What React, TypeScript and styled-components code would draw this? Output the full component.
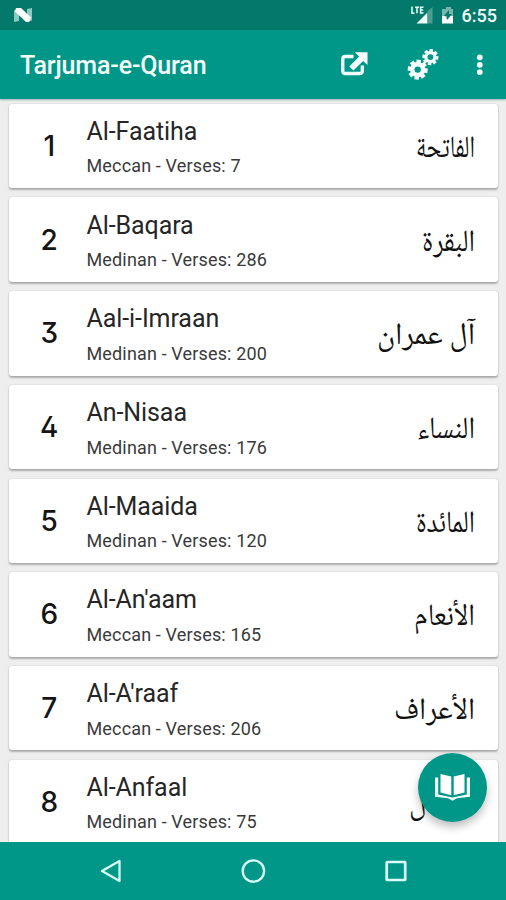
import React from 'react';
import styled, { createGlobalStyle } from 'styled-components';

const Global = createGlobalStyle`
  * { box-sizing: border-box; }
  body { margin: 0; background: #eeeeee; font-family: Roboto, "Liberation Sans", sans-serif; }
`;

const Screen = styled.div`
  position: relative;
  width: 506px;
  height: 900px;
  display: flex;
  flex-direction: column;
  overflow: hidden;
  background: #eeeeee;
`;

const StatusBar = styled.header`
  flex: 0 0 30px;
  display: flex;
  align-items: center;
  justify-content: space-between;
  padding: 0 9px 0 13px;
  background: #03796b;
`;

const StatusItems = styled.div`
  display: flex;
  align-items: center;
`;

const Clock = styled.span`
  margin-left: 8px;
  padding-top: 2px;
  font-size: 18px;
  line-height: 20px;
  font-weight: 500;
  color: #f2fffb;
`;

const AppBar = styled.div`
  flex: 0 0 68.5px;
  display: flex;
  align-items: center;
  padding: 4px 19px 0 20px;
  background: #009688;
  box-shadow: 0 1px 2px rgba(0, 70, 60, 0.35);
  z-index: 1;
`;

const Title = styled.h1`
  flex: 1;
  margin: 0;
  font-size: 25px;
  line-height: 30px;
  letter-spacing: -0.15px;
  font-weight: 500;
  color: #f4fffc;
`;

const Actions = styled.div`
  display: flex;
  align-items: center;
  svg { display: block; }
`;

const List = styled.main`
  flex: 1;
  min-height: 0;
  overflow: hidden;
  display: flex;
  flex-direction: column;
  gap: 9.3px;
  padding: 5.3px 8px 0 9px;
`;

const Card = styled.article`
  flex: 0 0 84.4px;
  display: flex;
  align-items: center;
  background: #ffffff;
  border-radius: 3px;
  padding-right: 23px;
  box-shadow: 0 1.5px 2px rgba(0, 0, 0, 0.27), 0 0 1.5px rgba(0, 0, 0, 0.14);
`;

const Index = styled.div`
  width: 77.5px;
  padding: 0 0 0 3px;
  text-align: center;
  font-family: Inter, sans-serif;
  font-feature-settings: "cv02", "cv09";
  font-size: 28px;
  font-weight: 500;
  color: #151515;
`;

const Info = styled.div`
  flex: 1;
  padding-top: 2.4px;
`;

const Name = styled.div`
  font-size: 25px;
  line-height: 32px;
  letter-spacing: -0.08px;
  color: #262626;
`;

const Detail = styled.div`
  margin-top: 6.5px;
  font-size: 18px;
  line-height: 24px;
  letter-spacing: 0.15px;
  color: #3a3a3a;
`;

const Arabic = styled.svg`
  display: block;
  width: 110px;
  height: 56px;
  overflow: visible;
  text {
    font-family: "Noto Naskh Arabic", Amiri, "DejaVu Sans", serif;
    font-size: 31px;
    fill: #111111;
  }
`;

const NavBar = styled.nav`
  flex: 0 0 58.5px;
  display: flex;
  justify-content: center;
  align-items: center;
  gap: 118px;
  background: #009688;
  svg { display: block; }
`;

const Fab = styled.button`
  position: absolute;
  right: 19px;
  bottom: 78px;
  width: 69px;
  height: 69px;
  padding: 0;
  border: 0;
  border-radius: 50%;
  display: grid;
  place-items: center;
  background: #009688;
  box-shadow: 0 5px 8px rgba(0, 0, 0, 0.25);
`;

type Surah = { name: string; place: string; verses: number; arabic: string; width: number };

const surahs: Surah[] = [
  { name: 'Al-Faatiha', place: 'Meccan', verses: 7, arabic: 'الفاتحة', width: 59 },
  { name: 'Al-Baqara', place: 'Medinan', verses: 286, arabic: 'البقرة', width: 53 },
  { name: 'Aal-i-Imraan', place: 'Medinan', verses: 200, arabic: 'آل عمران', width: 98 },
  { name: 'An-Nisaa', place: 'Medinan', verses: 176, arabic: 'النساء', width: 58 },
  { name: 'Al-Maaida', place: 'Medinan', verses: 120, arabic: 'المائدة', width: 59 },
  { name: "Al-An'aam", place: 'Meccan', verses: 165, arabic: 'الأنعام', width: 61 },
  { name: "Al-A'raaf", place: 'Meccan', verses: 206, arabic: 'الأعراف', width: 81 },
  { name: 'Al-Anfaal', place: 'Medinan', verses: 75, arabic: 'الأنفال', width: 66 },
];

function gear(cx: number, cy: number, outer: number, inner: number, hole: number) {
  const points: string[] = [];
  for (let i = 0; i < 8; i++) {
    const a = (i * Math.PI) / 4 + 0.12;
    [[-0.3, inner], [-0.22, outer], [0.22, outer], [0.3, inner]].forEach(([d, r]) => {
      points.push(`${(cx + Math.cos(a + d) * r).toFixed(2)} ${(cy + Math.sin(a + d) * r).toFixed(2)}`);
    });
  }
  return `M${points.join('L')}ZM${cx - hole} ${cy}a${hole} ${hole} 0 1 0 ${hole * 2} 0a${hole} ${hole} 0 1 0 ${-hole * 2} 0Z`;
}

export default function App() {
  return (
    <>
      <Global />
      <Screen>
        <StatusBar>
          <svg width="20" height="16" viewBox="0 0 20 16">
            <path d="M1 3.5 6 1v13l-5 1ZM14 2l5-1v12.5L14 15Z" fill="#8bcac0" />
            <path d="M3 1h5l10 9.5-2 4.5h-3L2 4.5Z" fill="#fff" />
          </svg>
          <StatusItems>
            <svg width="46" height="22" viewBox="0 0 46 22">
              <path d="M19.5 8.5v11H8.5Z" fill="#f4fffc" />
              <path d="M19.5 7 24.5 3v16.5h-5Z" fill="#4b9d92" />
              <path d="M4 2.5v6.7h2.5M7 3.2h4M9 3v6.2M15.5 3.2H12.6v5.9h2.9M12.6 6.1h2.6" fill="none" stroke="#e9fffb" strokeWidth="1.5" />
              <path d="M36 5h2V3h5v2h2v9H34V5Z" fill="#76b6ad" />
              <path d="M34 12h3l2 3 3-3h3v7.5H34Z" fill="#fff" />
              <path d="m41 6-5 6h3v4l5-6h-3Z" fill="#087669" />
            </svg>
            <Clock>6:55</Clock>
          </StatusItems>
        </StatusBar>
        <AppBar>
          <Title>Tarjuma-e-Quran</Title>
          <Actions>
            <svg width="148" height="36" viewBox="0 0 148 36">
              <path d="M14.5 8.5H6.3q-2.5 0-2.5 2.5v12q0 2.5 2.5 2.5h14.5q2.5 0 2.5-2.5v-5.5" fill="none" stroke="#f4fffc" strokeWidth="3.3" />
              <path d="M16 4.2H28.5v12.8l-4.4-4.1-9.7 9.7-4.1-4.1 9.7-9.7Z" fill="#f4fffc" />
              <path fillRule="evenodd" fill="#f4fffc" d={gear(78.7, 21.6, 10.2, 7.6, 3.2)} />
              <path fillRule="evenodd" fill="#f4fffc" d={gear(91.4, 9.1, 8.2, 6, 2.9)} />
              <circle cx="140.8" cy="9.3" r="2.9" fill="#f4fffc" />
              <circle cx="140.8" cy="16.8" r="2.9" fill="#f4fffc" />
              <circle cx="140.8" cy="24.1" r="2.9" fill="#f4fffc" />
            </svg>
          </Actions>
        </AppBar>
        <List>
          {surahs.map((s, i) => (
            <Card key={s.name}>
              <Index>{i + 1}</Index>
              <Info>
                <Name>{s.name}</Name>
                <Detail>{s.place} - Verses: {s.verses}</Detail>
              </Info>
              <Arabic viewBox="0 0 110 56">
                <text x="110" y="39" direction="rtl" textLength={s.width} lengthAdjust="spacingAndGlyphs">{s.arabic}</text>
              </Arabic>
            </Card>
          ))}
        </List>
        <NavBar>
          <svg width="24" height="26" viewBox="0 0 24 26">
            <path d="M21.5 3v20L4 13Z" fill="none" stroke="#d9fff8" strokeWidth="2.3" strokeLinejoin="round" />
          </svg>
          <svg width="26" height="26" viewBox="0 0 26 26">
            <circle cx="13.4" cy="13" r="10.7" fill="none" stroke="#d9fff8" strokeWidth="2.3" />
          </svg>
          <svg width="24" height="26" viewBox="0 0 24 26">
            <rect x="2.7" y="4" width="18.5" height="18" rx="0.5" fill="none" stroke="#d9fff8" strokeWidth="2.7" />
          </svg>
        </NavBar>
        <Fab aria-label="Open book">
          <svg width="35" height="27" viewBox="0 0 35 27">
            <path d="M5.5 0 16.3 2.6v18.6L5.5 18.6ZM29.5 0 18.7 2.6v18.6l10.8-2.6Z" fill="#fff" />
            <path d="M0 3.5h3.2V20.6L17.5 23.6 31.8 20.6V3.5H35v19.3l-13 1.5-4.5 2.4-4.5-2.4-13-1.5Z" fill="#f0fffc" />
          </svg>
        </Fab>
      </Screen>
    </>
  );
}
